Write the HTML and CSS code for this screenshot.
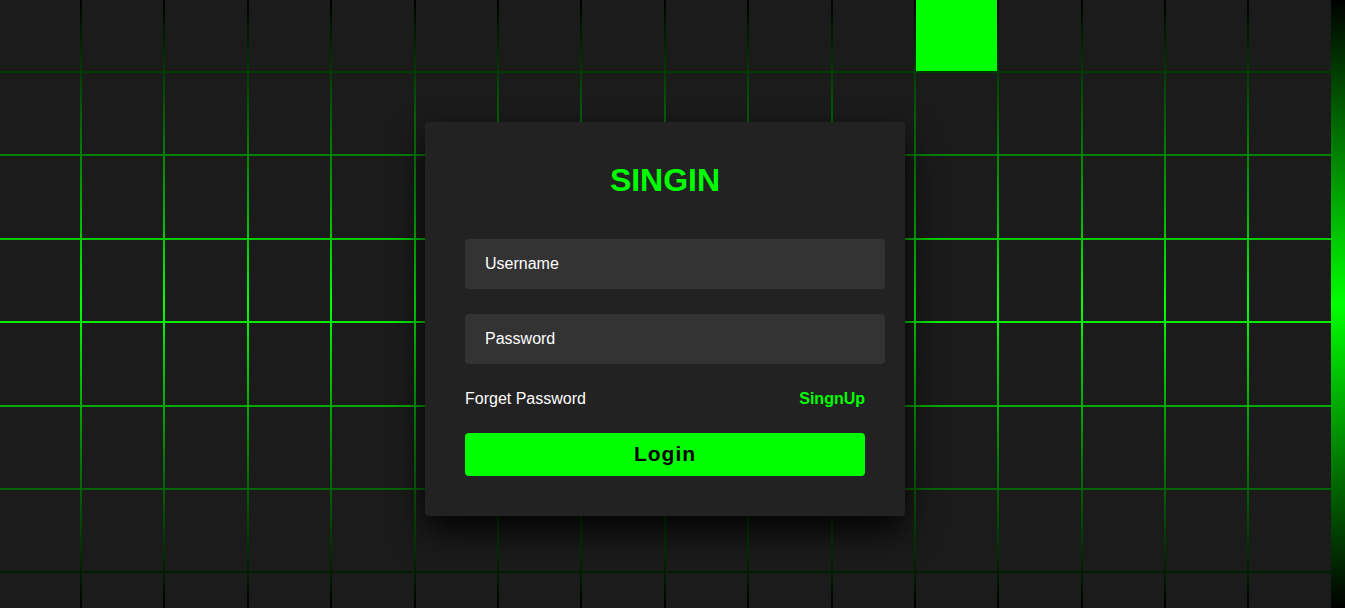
FILE: index.html
```html
<!DOCTYPE html>
<html lang="en">
<head>
    <meta charset="UTF-8">
    <meta name="viewport" content="width=device-width, initial-scale=1.0">
    <title>Signin</title>
    <link rel="stylesheet" href="styles.css">
</head>
<body>

<section class="scene">
    <div class="tiles">
        <span></span><span></span><span></span><span></span><span></span><span></span><span></span><span></span>
        <span></span><span></span><span></span><span class="lit"></span><span></span><span></span><span></span><span></span>
        <span></span><span></span><span></span><span></span><span></span><span></span><span></span><span></span>
        <span></span><span></span><span></span><span></span><span></span><span></span><span></span><span></span>
        <span></span><span></span><span></span><span></span><span></span><span></span><span></span><span></span>
        <span></span><span></span><span></span><span></span><span></span><span></span><span></span><span></span>
        <span></span><span></span><span></span><span></span><span></span><span></span><span></span><span></span>
        <span></span><span></span><span></span><span></span><span></span><span></span><span></span><span></span>
        <span></span><span></span><span></span><span></span><span></span><span></span><span></span><span></span>
        <span></span><span></span><span></span><span></span><span></span><span></span><span></span><span></span>
        <span></span><span></span><span></span><span></span><span></span><span></span><span></span><span></span>
        <span></span><span></span><span></span><span></span><span></span><span></span><span></span><span></span>
        <span></span><span></span><span></span><span></span><span></span><span></span><span></span><span></span>
        <span></span><span></span><span></span><span></span><span></span><span></span><span></span><span></span>
        <span></span><span></span><span></span><span></span><span></span><span></span><span></span><span></span>
        <span></span><span></span><span></span><span></span><span></span><span></span><span></span><span></span>
    </div>

    <div class="signin">
        <div class="content">
            <h2>Singin</h2>
            <div class="form">
                <input type="text" class="field" placeholder="Username">
                <input type="password" class="field" placeholder="Password">
                <div class="links">
                    <a href="#">Forget Password</a>
                    <a href="#" class="signup">SingnUp</a>
                </div>
                <button type="button" class="login">Login</button>
            </div>
        </div>
    </div>
</section>

</body>
</html>
```

FILE: styles.css
```css
* {
    margin: 0;
    padding: 0;
}

body {
    font-family: "Liberation Sans", Arial, sans-serif;
    background: #000;
    overflow: hidden;
}

.scene {
    position: relative;
    width: 100vw;
    height: 100vh;
    overflow: hidden;
    background: linear-gradient(#000, #0f0, #000);
}

.tiles {
    display: grid;
    grid-template-columns: repeat(16, 81.4px);
    grid-auto-rows: 81.4px;
    gap: 2px;
    margin: -10.4px 0 0 -1.4px;
}

.tiles span {
    display: block;
    background: #1b1b1b;
}

.tiles span.lit {
    background: #0f0;
}

.signin {
    position: absolute;
    left: 425px;
    top: 122px;
    width: 400px;
    padding: 40px;
    background: #222;
    border-radius: 4px;
    box-shadow: 0 15px 35px rgba(0, 0, 0, 0.9);
}

.content {
    display: flex;
    flex-direction: column;
    align-items: center;
    gap: 40px;
}

.content h2 {
    font-size: 32px;
    color: #0f0;
    text-transform: uppercase;
}

.form {
    width: 100%;
    display: flex;
    flex-direction: column;
    gap: 25px;
}

.field {
    box-sizing: border-box;
    width: calc(100% + 20px);
    height: 50px;
    padding: 0 20px;
    background: #333;
    border: none;
    outline: none;
    border-radius: 4px;
    color: #fff;
    font-family: inherit;
    font-size: 16px;
}

.field::placeholder {
    color: #fff;
    opacity: 1;
}

.links {
    display: flex;
    justify-content: space-between;
    font-size: 16px;
    line-height: 19px;
}

.links a {
    color: #fff;
    text-decoration: none;
}

.links a.signup {
    color: #0f0;
    font-weight: 600;
}

.login {
    width: 100%;
    height: 42.5px;
    padding: 0 10px;
    background: #0f0;
    color: #000;
    border: none;
    border-radius: 4px;
    font-family: inherit;
    font-weight: 600;
    font-size: 21px;
    letter-spacing: 1px;
    cursor: pointer;
}
```
